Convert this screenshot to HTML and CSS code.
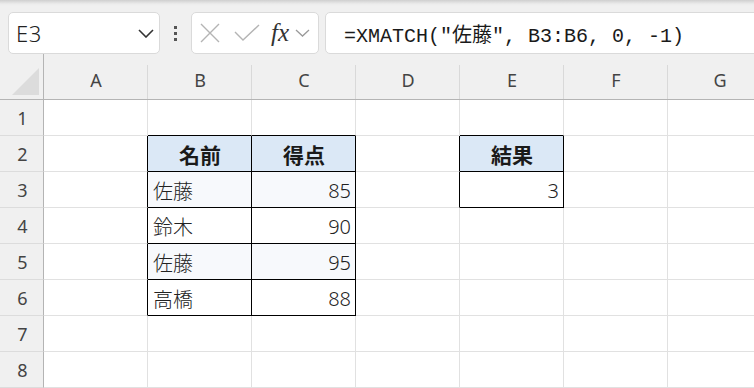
FILE: index.html
```html
<!DOCTYPE html>
<html lang="ja">
<head>
  <meta charset="UTF-8">
  <title>XMATCH</title>
  <link rel="stylesheet" href="styles.css">
</head>
<body>

  <div class="toolbar">
    <div class="name-box">
      <span>E3</span>
      <svg class="chevron" width="16" height="9" viewBox="0 0 16 9"><path d="M1 1 L8 8 L15 1" fill="none" stroke="#333" stroke-width="1.6"/></svg>
    </div>
    <div class="more"><i></i><i></i><i></i></div>
    <div class="fx-box">
      <svg width="20" height="20" viewBox="0 0 20 20"><path d="M1 1 L19 19 M19 1 L1 19" stroke="#b4b4b4" stroke-width="1.4"/></svg>
      <svg width="26" height="18" viewBox="0 0 26 18"><path d="M1 8 L9 16 L25 1" fill="none" stroke="#b4b4b4" stroke-width="1.4"/></svg>
      <span class="fx">fx</span>
      <svg width="15" height="8" viewBox="0 0 15 8"><path d="M1 1 L7.5 7 L14 1" fill="none" stroke="#9a9a9a" stroke-width="1.3"/></svg>
    </div>
    <div class="formula">=XMATCH("佐藤", B3:B6, 0, -1)</div>
  </div>

  <div class="sheet">
    <div class="corner">
      <svg width="28" height="27" viewBox="0 0 28 27"><polygon points="27,0 27,27 0,27" fill="#dcdcdc"/></svg>
    </div>
    <div class="col-head">A</div>
    <div class="col-head">B</div>
    <div class="col-head">C</div>
    <div class="col-head">D</div>
    <div class="col-head">E</div>
    <div class="col-head">F</div>
    <div class="col-head">G</div>

    <!-- row 1 -->
    <div class="row-head">1</div>
    <div class="cell"></div>
    <div class="cell edge-b"></div>
    <div class="cell edge-b"></div>
    <div class="cell"></div>
    <div class="cell edge-b"></div>
    <div class="cell"></div>
    <div class="cell"></div>

    <!-- row 2 -->
    <div class="row-head">2</div>
    <div class="cell edge-r"></div>
    <div class="cell th edge-r edge-b">名前</div>
    <div class="cell th edge-r edge-b">得点</div>
    <div class="cell edge-r"></div>
    <div class="cell th edge-r edge-b">結果</div>
    <div class="cell"></div>
    <div class="cell"></div>

    <!-- row 3 -->
    <div class="row-head">3</div>
    <div class="cell edge-r"></div>
    <div class="cell alt edge-r edge-b">佐藤</div>
    <div class="cell alt num edge-r edge-b">85</div>
    <div class="cell edge-r"></div>
    <div class="cell num edge-r edge-b">3</div>
    <div class="cell"></div>
    <div class="cell"></div>

    <!-- row 4 -->
    <div class="row-head">4</div>
    <div class="cell edge-r"></div>
    <div class="cell edge-r edge-b">鈴木</div>
    <div class="cell num edge-r edge-b">90</div>
    <div class="cell"></div>
    <div class="cell"></div>
    <div class="cell"></div>
    <div class="cell"></div>

    <!-- row 5 -->
    <div class="row-head">5</div>
    <div class="cell edge-r"></div>
    <div class="cell alt edge-r edge-b">佐藤</div>
    <div class="cell alt num edge-r edge-b">95</div>
    <div class="cell"></div>
    <div class="cell"></div>
    <div class="cell"></div>
    <div class="cell"></div>

    <!-- row 6 -->
    <div class="row-head">6</div>
    <div class="cell edge-r"></div>
    <div class="cell edge-r edge-b">高橋</div>
    <div class="cell num edge-r edge-b">88</div>
    <div class="cell"></div>
    <div class="cell"></div>
    <div class="cell"></div>
    <div class="cell"></div>

    <!-- row 7 -->
    <div class="row-head">7</div>
    <div class="cell"></div>
    <div class="cell"></div>
    <div class="cell"></div>
    <div class="cell"></div>
    <div class="cell"></div>
    <div class="cell"></div>
    <div class="cell"></div>

    <!-- row 8 -->
    <div class="row-head">8</div>
    <div class="cell"></div>
    <div class="cell"></div>
    <div class="cell"></div>
    <div class="cell"></div>
    <div class="cell"></div>
    <div class="cell"></div>
    <div class="cell"></div>
  </div>

</body>
</html>
```

FILE: styles.css
```css
* {
  margin: 0;
  padding: 0;
  box-sizing: border-box;
  font-family: 'Noto Sans', 'Noto Sans CJK JP', sans-serif;
}

body {
  background: #f0f0f0;
  width: 754px;
  height: 388px;
  overflow: hidden;
}

.toolbar {
  display: flex;
  align-items: flex-start;
  height: 54px;
  padding: 12px 0 0 8px;
  background: linear-gradient(#cfcfcf, #ececec 4px, #f0f0f0 6px);
}

.name-box {
  width: 152px;
  height: 42px;
  background: #fff;
  border: 1px solid #dadada;
  border-radius: 5px;
  display: flex;
  align-items: center;
  justify-content: space-between;
  padding: 0 5px 0 7px;
}

.name-box span {
  font-size: 22px;
  font-weight: 300;
  color: #222;
  letter-spacing: 0.5px;
}

.more {
  width: 31px;
  height: 42px;
  display: flex;
  flex-direction: column;
  align-items: center;
  justify-content: center;
  gap: 3px;
}

.more i {
  width: 3px;
  height: 3px;
  background: #555;
}

.fx-box {
  width: 128px;
  height: 42px;
  background: #fff;
  border: 1px solid #dadada;
  border-radius: 5px;
  display: flex;
  align-items: center;
  padding: 0 0 0 8px;
}

.fx-box svg:nth-child(2) {
  margin-left: 14px;
}

.fx {
  font-family: 'Liberation Serif', 'DejaVu Serif', serif;
  font-style: italic;
  font-size: 25px;
  color: #333;
  margin-left: 11px;
}

.fx-box svg:last-child {
  margin-left: 6px;
}

.formula {
  flex: 1;
  height: 42px;
  margin-left: 6px;
  margin-right: -10px;
  background: #fff;
  border: 1px solid #dadada;
  border-radius: 5px;
  padding-left: 18px;
  display: flex;
  align-items: center;
  font-family: 'Liberation Mono', 'Noto Sans CJK JP', monospace;
  font-size: 20px;
  color: #1a1a1a;
}

.sheet {
  display: grid;
  grid-template-columns: 44px repeat(7, 104px);
  grid-template-rows: 46px repeat(8, 36px);
}

.corner {
  display: flex;
  align-items: flex-end;
  justify-content: flex-end;
  padding: 0 3px 4px 0;
  border-right: 1px solid #b4b4b4;
  border-bottom: 1px solid #b4b4b4;
}

.col-head {
  display: flex;
  align-items: center;
  justify-content: center;
  padding-top: 6px;
  font-size: 18px;
  color: #444;
  border-bottom: 1px solid #b4b4b4;
  background: linear-gradient(#d9d9d9, #d9d9d9) no-repeat right bottom / 1px 34px;
}

.row-head {
  display: flex;
  align-items: center;
  justify-content: center;
  font-size: 18px;
  color: #444;
  border-right: 1px solid #b4b4b4;
  border-bottom: 1px solid #dcdcdc;
  padding-left: 2px;
}

.cell {
  background: #fff;
  border-right: 1px solid #e1e1e1;
  border-bottom: 1px solid #e1e1e1;
  display: flex;
  align-items: center;
  padding: 1px 4px 0 5px;
  font-size: 20px;
  font-weight: 300;
  color: #222;
  white-space: nowrap;
}

.cell.edge-r {
  border-right-color: #000;
}

.cell.edge-b {
  border-bottom-color: #000;
}

.cell.th {
  background: #dbe8f6;
  justify-content: center;
  font-weight: bold;
  font-size: 21px;
  color: #1a1a1a;
}

.cell.alt {
  background: #f7f9fc;
}

.cell.num {
  justify-content: flex-end;
}
```
